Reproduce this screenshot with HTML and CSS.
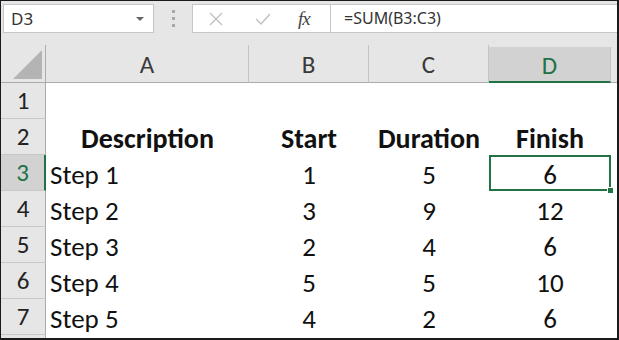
FILE: index.html
```html
<!DOCTYPE html>
<html lang="en">
<head>
    <meta charset="UTF-8">
    <title>Sheet</title>
    <link rel="stylesheet" href="styles.css">
</head>
<body>
    <div class="frame">
        <div class="toolbar">
            <div class="namebox">
                <span>D3</span>
                <span class="caret"></span>
            </div>
            <div class="dots"><i></i><i></i><i></i></div>
            <div class="formula">
                <div class="buttons">
                    <svg class="btn-x" width="16" height="16" viewBox="0 0 16 16">
                        <path d="M2 2 L14 14 M14 2 L2 14" stroke="#c0c0c0" stroke-width="1.4" fill="none"/>
                    </svg>
                    <svg class="btn-ok" width="18" height="16" viewBox="0 0 18 16">
                        <path d="M2 8 L7 13 L16 3" stroke="#c0c0c0" stroke-width="1.4" fill="none"/>
                    </svg>
                    <span class="fx">fx</span>
                </div>
                <div class="input">=SUM(B3:C3)</div>
            </div>
        </div>

        <div class="grid">
            <div class="corner"><span class="tri"></span></div>
            <div class="colhead">A</div>
            <div class="colhead">B</div>
            <div class="colhead">C</div>
            <div class="colhead active">D</div>
            <div class="colhead rest"></div>

            <div class="rowhead">1</div>
            <div class="cell"></div><div class="cell"></div><div class="cell"></div><div class="cell"></div><div class="cell"></div>

            <div class="rowhead">2</div>
            <div class="cell bold mid">Description</div>
            <div class="cell bold mid">Start</div>
            <div class="cell bold mid">Duration</div>
            <div class="cell bold mid">Finish</div>
            <div class="cell"></div>

            <div class="rowhead active">3</div>
            <div class="cell">Step 1</div>
            <div class="cell mid">1</div>
            <div class="cell mid">5</div>
            <div class="cell mid selected">6</div>
            <div class="cell"></div>

            <div class="rowhead">4</div>
            <div class="cell">Step 2</div>
            <div class="cell mid">3</div>
            <div class="cell mid">9</div>
            <div class="cell mid">12</div>
            <div class="cell"></div>

            <div class="rowhead">5</div>
            <div class="cell">Step 3</div>
            <div class="cell mid">2</div>
            <div class="cell mid">4</div>
            <div class="cell mid">6</div>
            <div class="cell"></div>

            <div class="rowhead">6</div>
            <div class="cell">Step 4</div>
            <div class="cell mid">5</div>
            <div class="cell mid">5</div>
            <div class="cell mid">10</div>
            <div class="cell"></div>

            <div class="rowhead">7</div>
            <div class="cell">Step 5</div>
            <div class="cell mid">4</div>
            <div class="cell mid">2</div>
            <div class="cell mid">6</div>
            <div class="cell"></div>

            <div class="rowhead"></div>
            <div class="cell"></div><div class="cell"></div><div class="cell"></div><div class="cell"></div><div class="cell"></div>
        </div>
    </div>
</body>
</html>
```

FILE: styles.css
```css
body {
    margin: 0;
    padding: 0;
    background-color: #fff;
}

.frame {
    width: 619px;
    height: 340px;
    box-sizing: border-box;
    border: 1px solid #1a1a1a;
    border-right-width: 2px;
    border-bottom-width: 2px;
    background-color: #e6e6e6;
    overflow: hidden;
}

/* formula bar */
.toolbar {
    display: flex;
    align-items: flex-start;
    height: 44px;
    padding: 3px 0 0 2px;
    box-sizing: border-box;
    font-family: "Noto Sans", sans-serif;
    font-size: 16px;
    color: #333;
}

.namebox {
    width: 151px;
    height: 29px;
    box-sizing: border-box;
    background-color: #fff;
    border: 1px solid #c6c6c6;
    display: flex;
    align-items: center;
    justify-content: space-between;
    padding: 0 9px 0 7px;
    font-size: 17px;
}

.caret {
    width: 0;
    height: 0;
    border-left: 4px solid transparent;
    border-right: 4px solid transparent;
    border-top: 4px solid #666;
}

.dots {
    width: 38px;
    height: 29px;
    display: flex;
    flex-direction: column;
    align-items: center;
    justify-content: center;
    gap: 4px;
}

.dots i {
    width: 3px;
    height: 3px;
    background-color: #a8a8a8;
}

.formula {
    flex: 1;
    height: 29px;
    box-sizing: border-box;
    background-color: #fff;
    border: 1px solid #c6c6c6;
    border-right: none;
    display: flex;
}

.buttons {
    width: 138px;
    border-right: 1px solid #c6c6c6;
    display: flex;
    align-items: center;
    padding-left: 15px;
    box-sizing: border-box;
}

.btn-x {
    margin-right: 30px;
}

.btn-ok {
    margin-right: 26px;
}

.fx {
    font-family: "Liberation Serif", serif;
    font-style: italic;
    font-size: 19px;
    color: #444;
    letter-spacing: -1px;
}

.input {
    padding-left: 13px;
    line-height: 27px;
}

/* sheet */
.grid {
    display: grid;
    grid-template-columns: 45px 203px 120px 120px 122px 1fr;
    grid-template-rows: 38px repeat(8, 36px);
    font-family: Carlito, Lato, sans-serif;
}

.corner {
    position: relative;
    border-right: 1px solid #ababab;
    border-bottom: 1px solid #ababab;
}

.tri {
    position: absolute;
    right: 3px;
    bottom: 3px;
    width: 0;
    height: 0;
    border-left: 29px solid transparent;
    border-bottom: 29px solid #b4b4b4;
}

.colhead {
    border-right: 1px solid #c4c4c4;
    border-bottom: 1px solid #ababab;
    display: flex;
    align-items: center;
    justify-content: center;
    font-size: 25px;
    color: #3a3a3a;
    padding-top: 2px;
}

.colhead.active {
    background-color: #d2d2d2;
    color: #217346;
    border-bottom: 2px solid #217346;
    margin-top: 2px;
}

.colhead.rest {
    border-right: none;
}

.rowhead {
    border-right: 1px solid #ababab;
    border-bottom: 1px solid #c8c8c8;
    display: flex;
    align-items: center;
    justify-content: center;
    font-size: 25px;
    color: #222;
}

.rowhead.active {
    background-color: #d2d2d2;
    color: #217346;
    border-right: 2px solid #217346;
}

.cell {
    background-color: #fff;
    display: flex;
    align-items: center;
    padding: 2px 0 0 4px;
    font-size: 27px;
    color: #111;
    box-sizing: border-box;
}

.cell.mid {
    justify-content: center;
    padding-left: 0;
}

.cell.bold {
    font-weight: bold;
    font-size: 28px;
}

.cell.selected {
    position: relative;
    outline: 2px solid #217346;
    outline-offset: -2px;
}

.cell.selected::after {
    content: "";
    position: absolute;
    right: -3px;
    bottom: -3px;
    width: 5px;
    height: 5px;
    background-color: #217346;
    border: 1px solid #fff;
}
```
